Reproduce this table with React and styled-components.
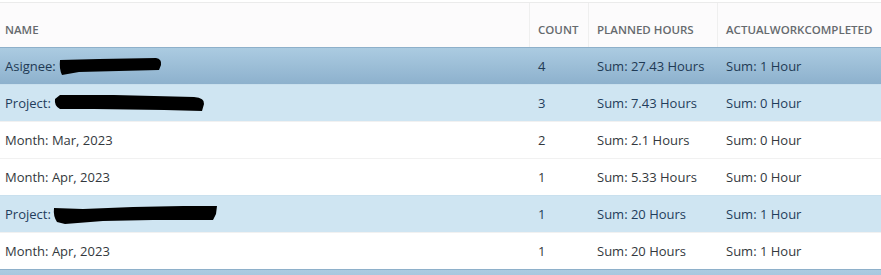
import React from 'react';
import styled, { createGlobalStyle, css } from 'styled-components';

const GlobalStyle = createGlobalStyle`
  html, body {
    margin: 0;
    padding: 0;
    background: #ffffff;
  }
  body {
    font-family: "Open Sans", Lato, Arial, sans-serif;
    overflow: hidden;
  }
`;

const COLUMNS = '529px 59px 129px 1fr';

const Wrapper = styled.div`
  padding-top: 2px;
  width: 881px;
`;

const HeaderRow = styled.div`
  background: #fcfbfc;
  border-top: 1px solid #ebebeb;
  display: grid;
  grid-template-columns: ${COLUMNS};
  height: 44px;
`;

const HeaderCell = styled.div`
  align-items: flex-end;
  border-left: ${(p) => (p.first ? 'none' : '1px solid #efefef')};
  color: #666a6e;
  display: flex;
  font-size: 11.5px;
  font-weight: 600;
  line-height: 13px;
  padding: 0 0 11px ${(p) => (p.first ? '5px' : '8px')};
  text-transform: uppercase;
`;

const variants = {
  group: css`
    background: linear-gradient(#abcbe1, #8db1cd);
    border-top: 1px solid #8eb0ca;
    color: #1f3a55;
  `,
  sub: css`
    background: #cfe5f2;
    border-top: 1px solid #c9e0ee;
    color: #1f3d5c;
  `,
  leaf: css`
    background: #ffffff;
    border-top: 1px solid #f1f1f1;
    color: #33383d;
  `,
};

const Row = styled.div`
  display: grid;
  grid-template-columns: ${COLUMNS};
  height: 36px;
  ${(p) => variants[p.kind]}
`;

const Cell = styled.div`
  align-items: center;
  display: flex;
  font-size: 13px;
  padding-left: ${(p) => (p.first ? '5px' : '9px')};
  white-space: nowrap;
`;

const Redacted = styled.svg`
  display: block;
  margin-left: ${(p) => p.offset}px;
  margin-top: ${(p) => p.drop}px;
`;

const Blot = ({ width, offset, drop, d }) => (
  <Redacted width={width} height="20" viewBox={`0 0 ${width} 20`} offset={offset} drop={drop}>
    <path d={d} fill="#000" />
  </Redacted>
);

const blots = {
  a: { width: 103, offset: 3, drop: 3, d: 'M1 2 L40 1 L97 0 Q103 1 102 7 L100 12 L60 13 L20 14 L3 17 Q0 11 1 2 Z' },
  b: { width: 152, offset: 3, drop: 4, d: 'M1 4 L6 0 L60 0 L140 2 Q151 3 150 9 L148 16 L110 15 L40 14 L6 14 Q0 11 1 4 Z' },
  c: { width: 165, offset: 2, drop: 4, d: 'M1 2 L30 3 L80 1 L130 0 L164 0 L163 8 L160 14 L100 14 L50 15 L12 18 L4 16 Q0 10 1 2 Z' },
};

const rows = [
  { kind: 'group', label: 'Asignee:', blot: 'a', count: 4, planned: 'Sum: 27.43 Hours', actual: 'Sum: 1 Hour' },
  { kind: 'sub', label: 'Project:', blot: 'b', count: 3, planned: 'Sum: 7.43 Hours', actual: 'Sum: 0 Hour' },
  { kind: 'leaf', label: 'Month: Mar, 2023', count: 2, planned: 'Sum: 2.1 Hours', actual: 'Sum: 0 Hour' },
  { kind: 'leaf', label: 'Month: Apr, 2023', count: 1, planned: 'Sum: 5.33 Hours', actual: 'Sum: 0 Hour' },
  { kind: 'sub', label: 'Project:', blot: 'c', count: 1, planned: 'Sum: 20 Hours', actual: 'Sum: 1 Hour' },
  { kind: 'leaf', label: 'Month: Apr, 2023', count: 1, planned: 'Sum: 20 Hours', actual: 'Sum: 1 Hour' },
];

const App = () => (
  <Wrapper>
    <GlobalStyle />
    <HeaderRow>
      <HeaderCell first>Name</HeaderCell>
      <HeaderCell>Count</HeaderCell>
      <HeaderCell>Planned Hours</HeaderCell>
      <HeaderCell>ActualWorkCompleted</HeaderCell>
    </HeaderRow>
    {rows.map((r, i) => (
      <Row key={i} kind={r.kind}>
        <Cell first>
          {r.label}
          {r.blot && <Blot {...blots[r.blot]} />}
        </Cell>
        <Cell>{r.count}</Cell>
        <Cell>{r.planned}</Cell>
        <Cell>{r.actual}</Cell>
      </Row>
    ))}
    <Row kind="group" />
  </Wrapper>
);

export default App;
